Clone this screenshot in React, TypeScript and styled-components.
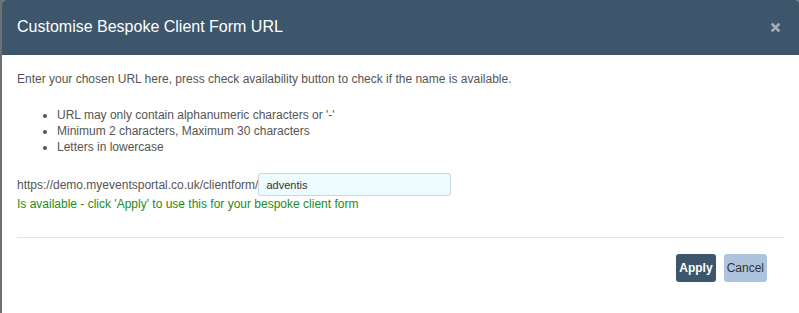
import React, { useState } from "react";
import styled, { createGlobalStyle } from "styled-components";

const GlobalStyle = createGlobalStyle`
  html, body {
    margin: 0;
    padding: 0;
    background: #6f6f6f;
    font-family: "Liberation Sans", Arial, sans-serif;
  }
`;

const Modal = styled.div`
  margin-left: 2px;
  width: 797px;
  height: 313px;
  background: #fff;
  border-radius: 4px 4px 0 0;
  overflow: hidden;
  display: flex;
  flex-direction: column;
`;

const Header = styled.div`
  height: 55px;
  box-sizing: border-box;
  background: #3d566b;
  display: flex;
  align-items: center;
  justify-content: space-between;
  padding: 0 19px 1px 15px;
`;

const Title = styled.h4`
  margin: 0;
  color: #fff;
  font-size: 16px;
  font-weight: normal;
`;

const Close = styled.button`
  border: 0;
  background: transparent;
  padding: 0;
  width: 9px;
  height: 9px;
  display: flex;
  cursor: pointer;
`;

const Body = styled.div`
  padding: 16px 15px 0 15px;
  color: #555;
  font-size: 12px;
`;

const Intro = styled.p`
  margin: 0;
  line-height: 16px;
`;

const Rules = styled.ul`
  margin: 20px 0 0 0;
  padding-left: 40px;
  line-height: 16px;
`;

const UrlRow = styled.div`
  display: flex;
  align-items: center;
  margin-top: 18px;
`;

const Prefix = styled.span`
  line-height: 16px;
`;

const Slug = styled.input`
  width: 193px;
  height: 23px;
  box-sizing: border-box;
  border: 1px solid #ccd6dc;
  border-radius: 3px;
  background: #eefbff;
  padding: 0 7px;
  font-family: "Liberation Sans", Arial, sans-serif;
  font-size: 11px;
  color: #333;
  outline: none;
`;

const Status = styled.div`
  color: #1d8b1d;
  margin-top: 0;
  line-height: 16px;
`;

const Divider = styled.hr`
  border: 0;
  border-top: 1px solid #e5e5e5;
  margin: 25px 0 0 0;
`;

const Footer = styled.div`
  display: flex;
  justify-content: flex-end;
  gap: 8px;
  padding: 16px 32px 0 15px;
`;

const Btn = styled.button<{ $primary?: boolean }>`
  height: 28px;
  padding: 0 3px;
  border: 0;
  border-radius: 3px;
  font-family: "Liberation Sans", Arial, sans-serif;
  font-size: 12px;
  background: ${(p) => (p.$primary ? "#3d566b" : "#aec4dc")};
  color: ${(p) => (p.$primary ? "#fff" : "#333")};
  font-weight: ${(p) => (p.$primary ? "bold" : "normal")};
  cursor: pointer;
`;

export default function App() {
  const [slug, setSlug] = useState("adventis");

  return (
    <>
      <GlobalStyle />
      <Modal>
        <Header>
          <Title>Customise Bespoke Client Form URL</Title>
          <Close aria-label="Close">
            <svg width="9" height="9" viewBox="0 0 9 9">
              <path
                d="M1.5 1.5 L7.5 7.5 M7.5 1.5 L1.5 7.5"
                stroke="#a3adb8"
                strokeWidth="2.6"
                strokeLinecap="square"
              />
            </svg>
          </Close>
        </Header>
        <Body>
          <Intro>
            Enter your chosen URL here, press check availability button to
            check if the name is available.
          </Intro>
          <Rules>
            <li>URL may only contain alphanumeric characters or '-'</li>
            <li>Minimum 2 characters, Maximum 30 characters</li>
            <li>Letters in lowercase</li>
          </Rules>
          <UrlRow>
            <Prefix>https://demo.myeventsportal.co.uk/clientform/</Prefix>
            <Slug value={slug} onChange={(e) => setSlug(e.target.value)} />
          </UrlRow>
          <Status>
            Is available - click 'Apply' to use this for your bespoke client
            form
          </Status>
          <Divider />
        </Body>
        <Footer>
          <Btn $primary>Apply</Btn>
          <Btn>Cancel</Btn>
        </Footer>
      </Modal>
    </>
  );
}
